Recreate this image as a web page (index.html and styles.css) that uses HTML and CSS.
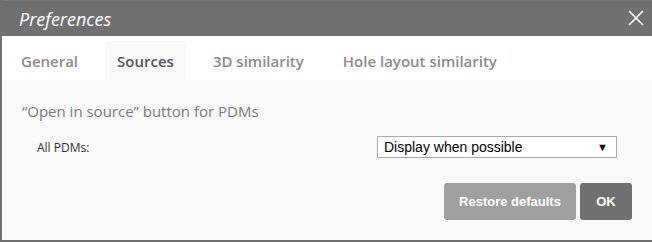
FILE: index.html
```html
<!DOCTYPE html>
<html lang="en">

<head>
  <meta charset="UTF-8" />
  <meta name="viewport" content="width=device-width, initial-scale=1.0" />
  <title>Preferences</title>
  <link rel="stylesheet" href="styles.css">
</head>

<body>
  <!-- Preferences dialog -->
  <div class="dialog">
    <div class="dialog-header">
      <span class="dialog-title">Preferences</span>
      <svg class="close-icon" width="16" height="16" viewBox="0 0 16 16">
        <path d="M1 1 L15 15 M15 1 L1 15" stroke="#fff" stroke-width="1.6" fill="none" />
      </svg>
    </div>

    <!-- Tabs -->
    <div class="tabs">
      <div class="tab">General</div>
      <div class="tab active">Sources</div>
      <div class="tab">3D similarity</div>
      <div class="tab">Hole layout similarity</div>
    </div>

    <!-- Tab content -->
    <div class="content">
      <div class="section-title">“Open in source” button for PDMs</div>
      <div class="field-row">
        <span class="field-label">All PDMs:</span>
        <div class="select-box">
          <span>Display when possible</span>
          <span class="select-arrow">▼</span>
        </div>
      </div>
      <div class="actions">
        <button class="btn btn-light">Restore defaults</button>
        <button class="btn btn-dark">OK</button>
      </div>
    </div>
  </div>
</body>

</html>
```

FILE: styles.css
```css
body {
  margin: 0;
  font-family: "Open Sans", sans-serif;
  background: #fff;
}

.dialog {
  width: 650px;
  height: 240px;
  border-left: 2px solid #707070;
  border-bottom: 2px solid #707070;
  display: flex;
  flex-direction: column;
  background: #fff;
}

.dialog-header {
  height: 35px;
  border-top: 1px solid #7c7c7c;
  background: #707070;
  display: flex;
  align-items: center;
  justify-content: space-between;
  padding: 0 8px 0 17px;
}

.dialog-title {
  color: #fff;
  font-style: italic;
  font-size: 18px;
}

.close-icon {
  display: block;
  margin-top: -1px;
}

.tabs {
  display: flex;
  gap: 15px;
  padding: 5px 0 0 7px;
  height: 39px;
}

.tab {
  padding: 0 12px;
  display: flex;
  align-items: center;
  font-size: 15px;
  font-weight: 600;
  color: #8a8a8a;
}

.tab.active {
  background: #f9f9f9;
  color: #555;
}

.content {
  flex: 1;
  background: #f9f9f9;
  padding: 21px 20px 0 20px;
}

.section-title {
  font-size: 15px;
  color: #7a7a7a;
  height: 22px;
}

.field-row {
  display: flex;
  align-items: center;
  justify-content: space-between;
  margin-top: 13px;
  padding: 0 15px 0 15px;
}

.field-label {
  font-size: 12px;
  color: #333;
}

.select-box {
  width: 226px;
  height: 20px;
  border: 1px solid #a9a9a9;
  background: #fff;
  display: flex;
  align-items: center;
  justify-content: space-between;
  padding: 0 6px;
  box-sizing: content-box;
  font-family: "Liberation Sans", Arial, sans-serif;
  font-size: 14px;
  color: #000;
}

.select-arrow {
  font-size: 11px;
  margin-right: 2px;
}

.actions {
  display: flex;
  justify-content: flex-end;
  gap: 4px;
  margin-top: 25px;
}

.btn {
  height: 37px;
  border: none;
  border-radius: 3px;
  color: #fff;
  font-family: "Liberation Sans", Arial, sans-serif;
  font-weight: bold;
  font-size: 13px;
  padding: 0;
  white-space: nowrap;
  cursor: pointer;
}

.btn-light {
  background: #a0a0a0;
  width: 132px;
}

.btn-dark {
  background: #707070;
  width: 52px;
}
```
